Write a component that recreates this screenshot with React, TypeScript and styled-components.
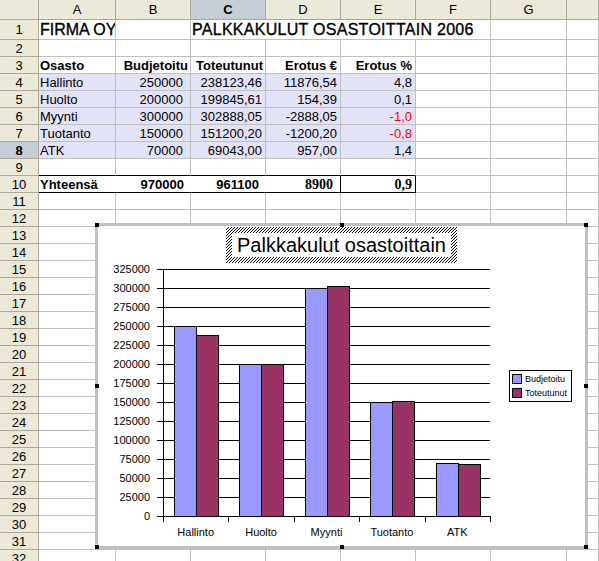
import React from "react";
import styled, { createGlobalStyle } from "styled-components";

const GRID = "#c0c0c0";
const HEAD_LINE = "#aca899";
const LAVENDER = "#e3e3f8";
const BLUE = "#9999ff";
const PLUM = "#993366";

const GlobalStyle = createGlobalStyle`
  html, body {
    margin: 0;
    padding: 0;
    background: #fff;
  }
  body {
    font-family: "Liberation Sans", Arial, sans-serif;
  }
`;

const Page = styled.div`
  position: relative;
  width: 599px;
  height: 561px;
  overflow: hidden;
  background: #fff;
`;

const Sheet = styled.div`
  font-family: "Liberation Sans", Arial, sans-serif;
  font-size: 13px;
  color: #000;
`;

const SheetRow = styled.div<{ $h: number; $lh: number }>`
  display: grid;
  grid-template-columns: 39px 77px 75px 75px 75px 75px 75px 76px 1fr;
  height: ${(p) => p.$h}px;
  line-height: ${(p) => p.$lh}px;
`;

const Head = styled.div<{ $active?: boolean }>`
  box-sizing: border-box;
  background: ${(p) => (p.$active ? "#c5cdd6" : "#ece9d8")};
  border-right: 1px solid ${HEAD_LINE};
  border-bottom: 1px solid ${HEAD_LINE};
  font-weight: ${(p) => (p.$active ? 700 : 400)};
  text-align: center;
  overflow: hidden;
`;

const Cell = styled.div<{
  $align?: "left" | "right";
  $bold?: boolean;
  $fill?: boolean;
  $red?: boolean;
  $pad?: number;
  $span?: number;
  $size?: number;
  $serif?: boolean;
  $title?: boolean;
  $wide?: boolean;
  $right?: string;
  $bottom?: string;
}>`
  box-sizing: border-box;
  grid-column: span ${(p) => p.$span ?? 1};
  border-right: ${(p) => p.$right ?? `1px solid ${GRID}`};
  border-bottom: 1px solid ${(p) => p.$bottom ?? GRID};
  background: ${(p) => (p.$fill ? LAVENDER : "transparent")};
  text-align: ${(p) => p.$align ?? "left"};
  padding: ${(p) => (p.$align === "right" ? `0 ${p.$pad ?? 3}px 0 0` : "0 0 0 1px")};
  font-weight: ${(p) => (p.$bold ? 700 : 400)};
  font-size: ${(p) => (p.$title ? 16 : p.$size ?? 13)}px;
  font-family: ${(p) =>
    p.$serif ? '"Liberation Serif", "Times New Roman", serif' : "inherit"};
  color: ${(p) => (p.$red ? "#ff0000" : "#000")};
  letter-spacing: ${(p) => (p.$wide ? "0.28px" : "normal")};
  -webkit-text-stroke: ${(p) => (p.$title ? "0.35px #000" : "0")};
  white-space: nowrap;
  overflow: hidden;
`;

/* ---------- chart ---------- */

const ChartFrame = styled.div`
  position: absolute;
  left: 95px;
  top: 223px;
  width: 493px;
  height: 326px;
  box-sizing: border-box;
  border: 3px solid #c0c0c0;
  background: #fff;
  display: flex;
  flex-direction: column;
  font-family: "Liberation Sans", Arial, sans-serif;
  color: #000;
`;

const Handle = styled.span<{ $x: "l" | "c" | "r"; $y: "t" | "m" | "b" }>`
  position: absolute;
  width: 4px;
  height: 4px;
  background: #000;
  ${(p) =>
    p.$x === "l" ? "left: -3px;" : p.$x === "r" ? "right: -3px;" : "left: calc(50% - 2px);"}
  ${(p) =>
    p.$y === "t" ? "top: -3px;" : p.$y === "b" ? "bottom: -3px;" : "top: calc(50% - 2px);"}
`;

const TitleRow = styled.div`
  display: flex;
  justify-content: center;
  margin-top: 1px;
`;

const TitleBox = styled.div`
  position: relative;
  padding: 6px;
`;

const Hatch = styled.svg`
  position: absolute;
  inset: 0;
  width: 100%;
  height: 100%;
`;

const TitleText = styled.div`
  position: relative;
  background: #fff;
  font-size: 20px;
  line-height: 24px;
  padding: 0 5px;
  white-space: nowrap;
`;

const ChartBody = styled.div`
  display: flex;
  align-items: flex-start;
`;

const Plot = styled.svg`
  display: block;
  flex: none;
  font-family: "Liberation Sans", Arial, sans-serif;
  font-size: 11px;
`;

const Legend = styled.div`
  margin: 107px 0 0 9px;
  border: 1px solid #000;
  padding: 3px 4px 3px 2px;
  display: flex;
  flex-direction: column;
  gap: 4px;
`;

const LegendItem = styled.div`
  display: flex;
  align-items: center;
  gap: 3px;
  height: 10px;
  font-size: 9px;
  line-height: 10px;
  white-space: nowrap;
`;

const Swatch = styled.span<{ $color: string }>`
  box-sizing: border-box;
  width: 10px;
  height: 10px;
  border: 1px solid #000;
  background: ${(p) => p.$color};
`;

type Spec = {
  text?: string;
  align?: "left" | "right";
  bold?: boolean;
  fill?: boolean;
  red?: boolean;
  pad?: number;
  span?: number;
  size?: number;
  serif?: boolean;
  title?: boolean;
  wide?: boolean;
  right?: string;
  bottom?: string;
};

const COLS = ["A", "B", "C", "D", "E", "F", "G", ""];

const rows: string[][] = [
  ["Hallinto", "250000", "238123,46", "11876,54", "4,8"],
  ["Huolto", "200000", "199845,61", "154,39", "0,1"],
  ["Myynti", "300000", "302888,05", "-2888,05", "-1,0"],
  ["Tuotanto", "150000", "151200,20", "-1200,20", "-0,8"],
  ["ATK", "70000", "69043,00", "957,00", "1,4"],
];

const blank = (n: number): Spec[] => Array.from({ length: n }, () => ({}));

function cellsFor(r: number): Spec[] {
  if (r === 1) {
    return [
      { text: "FIRMA OY", title: true },
      {},
      { text: "PALKKAKULUT OSASTOITTAIN 2006", title: true, span: 4, wide: true },
      {},
      {},
    ];
  }
  if (r === 3) {
    return [
      { text: "Osasto", bold: true },
      { text: "Budjetoitu", bold: true, align: "right", pad: 2 },
      { text: "Toteutunut", bold: true, align: "right", pad: 2 },
      { text: "Erotus €", bold: true, align: "right", pad: 3 },
      { text: "Erotus %", bold: true, align: "right", pad: 3 },
      ...blank(3),
    ];
  }
  if (r >= 4 && r <= 8) {
    const d = rows[r - 4];
    return [
      { text: d[0], fill: true },
      { text: d[1], fill: true, align: "right", pad: 7 },
      { text: d[2], fill: true, align: "right", pad: 3 },
      { text: d[3], fill: true, align: "right", pad: 3 },
      { text: d[4], fill: true, align: "right", pad: 3, red: d[4].startsWith("-") },
      ...blank(3),
    ];
  }
  if (r === 9) {
    return [
      ...Array.from({ length: 5 }, () => ({ bottom: "#000" })),
      ...blank(3),
    ];
  }
  if (r === 10) {
    return [
      { text: "Yhteensä", bold: true, right: "none", bottom: "#000" },
      { text: "970000", bold: true, align: "right", pad: 7, right: "none", bottom: "#000" },
      { text: "961100", bold: true, align: "right", pad: 7, right: "none", bottom: "#000" },
      { text: "8900", bold: true, serif: true, size: 14, align: "right", pad: 7, right: "1px solid #000", bottom: "#000" },
      { text: "0,9", bold: true, serif: true, size: 14, align: "right", pad: 3, right: "1px solid #000", bottom: "#000" },
      ...blank(3),
    ];
  }
  return blank(8);
}

/* chart geometry (svg coordinates, origin at page 98,263) */
const AX = 65;
const RIGHT = 392;
const ZERO = 253;
const CAT_W = (RIGHT - AX) / 5;
const yOf = (v: number) => ZERO - (v / 325000) * 247;
const yTicks = Array.from({ length: 14 }, (_, i) => i * 25000);

const series = [
  { name: "Budjetoitu", color: BLUE, values: [250000, 200000, 300000, 150000, 70000] },
  { name: "Toteutunut", color: PLUM, values: [238123.46, 199845.61, 302888.05, 151200.2, 69043] },
];
const categories = ["Hallinto", "Huolto", "Myynti", "Tuotanto", "ATK"];

function Chart() {
  return (
    <ChartFrame>
      <Handle $x="l" $y="t" />
      <Handle $x="c" $y="t" />
      <Handle $x="r" $y="t" />
      <Handle $x="l" $y="m" />
      <Handle $x="r" $y="m" />
      <Handle $x="l" $y="b" />
      <Handle $x="c" $y="b" />
      <Handle $x="r" $y="b" />

      <TitleRow>
        <TitleBox>
          <Hatch>
            <defs>
              <pattern id="hatch" width="3" height="3" patternUnits="userSpaceOnUse">
                <rect x="2" y="0" width="1" height="1" fill="#000" />
                <rect x="1" y="1" width="1" height="1" fill="#000" />
                <rect x="0" y="2" width="1" height="1" fill="#000" />
              </pattern>
            </defs>
            <rect width="100%" height="100%" fill="url(#hatch)" />
          </Hatch>
          <TitleText>Palkkakulut osastoittain</TitleText>
        </TitleBox>
      </TitleRow>

      <ChartBody>
        <Plot width={402} height={283} shapeRendering="crispEdges">
          {yTicks.map((v) => {
            const y = Math.round(yOf(v)) + 0.5;
            return (
              <g key={v}>
                <line x1={59} x2={RIGHT} y1={y} y2={y} stroke="#000" />
                <text x={52} y={y + 3.5} textAnchor="end" shapeRendering="auto">
                  {v}
                </text>
              </g>
            );
          })}
          <line x1={AX + 0.5} x2={AX + 0.5} y1={6} y2={ZERO + 6} stroke="#000" />
          {Array.from({ length: 6 }, (_, i) => {
            const x = Math.round(AX + i * CAT_W) + 0.5;
            return <line key={i} x1={x} x2={x} y1={ZERO} y2={ZERO + 6} stroke="#000" />;
          })}
          {categories.map((c, i) => {
            const x0 = Math.round(AX + i * CAT_W + CAT_W / 6);
            const edges = [x0, Math.round(x0 + CAT_W / 3), Math.round(x0 + (2 * CAT_W) / 3)];
            return (
              <g key={c}>
                {series.map((s, k) => {
                  const top = Math.round(yOf(s.values[i]));
                  return (
                    <rect
                      key={s.name}
                      x={edges[k] + 0.5}
                      y={top + 0.5}
                      width={edges[k + 1] - edges[k]}
                      height={ZERO - top}
                      fill={s.color}
                      stroke="#000"
                    />
                  );
                })}
                <text x={AX + (i + 0.5) * CAT_W} y={273} textAnchor="middle" shapeRendering="auto">
                  {c}
                </text>
              </g>
            );
          })}
        </Plot>

        <Legend>
          {series.map((s) => (
            <LegendItem key={s.name}>
              <Swatch $color={s.color} />
              {s.name}
            </LegendItem>
          ))}
        </Legend>
      </ChartBody>
    </ChartFrame>
  );
}

export default function App() {
  return (
    <Page>
      <GlobalStyle />
      <Sheet>
        <SheetRow $h={20} $lh={19}>
          <Head />
          {COLS.map((c, i) => (
            <Head key={i} $active={c === "C"}>
              {c}
            </Head>
          ))}
        </SheetRow>
        {Array.from({ length: 32 }, (_, i) => {
          const r = i + 1;
          const h = r === 1 ? 20 : 17;
          return (
            <SheetRow key={r} $h={h} $lh={r === 1 ? 19 : 17}>
              <Head $active={r === 8}>{r}</Head>
              {cellsFor(r).map((s, k) => (
                <Cell
                  key={k}
                  $align={s.align}
                  $bold={s.bold}
                  $fill={s.fill}
                  $red={s.red}
                  $pad={s.pad}
                  $span={s.span}
                  $size={s.size}
                  $serif={s.serif}
                  $title={s.title}
                  $wide={s.wide}
                  $right={s.right}
                  $bottom={s.bottom}
                >
                  {s.text}
                </Cell>
              ))}
            </SheetRow>
          );
        })}
      </Sheet>
      <Chart />
    </Page>
  );
}
